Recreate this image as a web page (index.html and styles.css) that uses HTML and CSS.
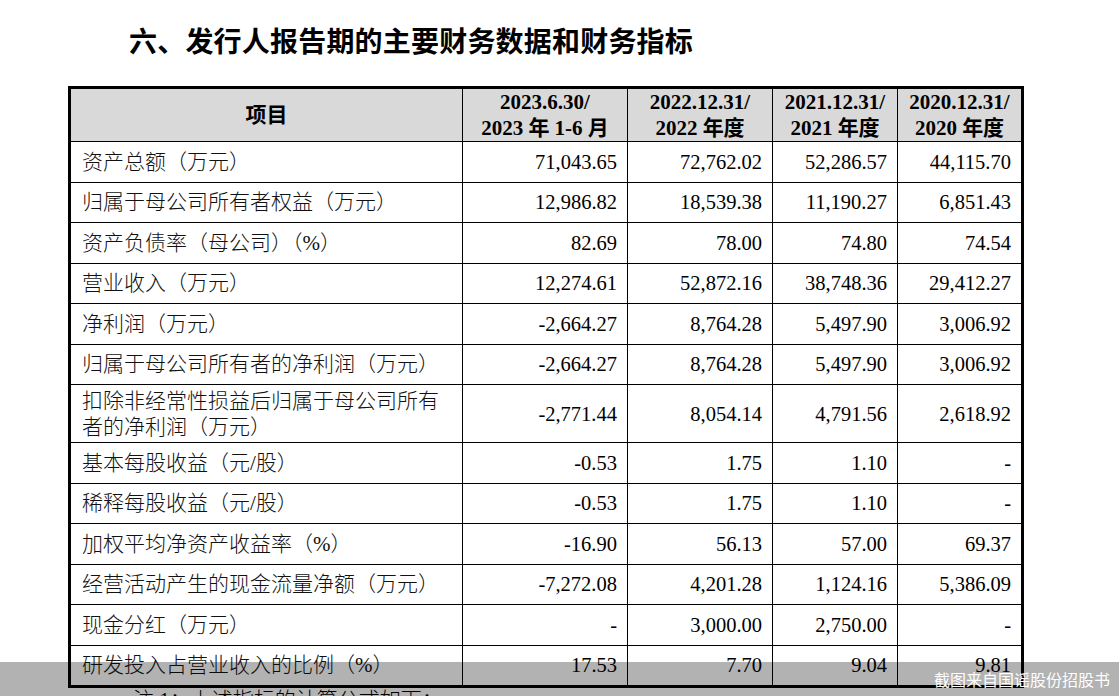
FILE: index.html
```html
<!DOCTYPE html>
<html lang="zh-CN">
<head>
<meta charset="utf-8">
<title>六、发行人报告期的主要财务数据和财务指标</title>
<link rel="stylesheet" href="styles.css">
</head>
<body>
<div class="page">
  <h1 class="title">六、发行人报告期的主要财务数据和财务指标</h1>
  <div class="fin-table">
    <div class="row head">
      <div class="cell">项目</div>
      <div class="cell">2023.6.30/<br>2023 年 1-6 月</div>
      <div class="cell">2022.12.31/<br>2022 年度</div>
      <div class="cell">2021.12.31/<br>2021 年度</div>
      <div class="cell">2020.12.31/<br>2020 年度</div>
    </div>
    <div class="row">
      <div class="cell">资产总额（万元）</div>
      <div class="cell">71,043.65</div><div class="cell">72,762.02</div><div class="cell">52,286.57</div><div class="cell">44,115.70</div>
    </div>
    <div class="row">
      <div class="cell">归属于母公司所有者权益（万元）</div>
      <div class="cell">12,986.82</div><div class="cell">18,539.38</div><div class="cell">11,190.27</div><div class="cell">6,851.43</div>
    </div>
    <div class="row">
      <div class="cell">资产负债率（母公司）（%）</div>
      <div class="cell">82.69</div><div class="cell">78.00</div><div class="cell">74.80</div><div class="cell">74.54</div>
    </div>
    <div class="row">
      <div class="cell">营业收入（万元）</div>
      <div class="cell">12,274.61</div><div class="cell">52,872.16</div><div class="cell">38,748.36</div><div class="cell">29,412.27</div>
    </div>
    <div class="row">
      <div class="cell">净利润（万元）</div>
      <div class="cell">-2,664.27</div><div class="cell">8,764.28</div><div class="cell">5,497.90</div><div class="cell">3,006.92</div>
    </div>
    <div class="row">
      <div class="cell">归属于母公司所有者的净利润（万元）</div>
      <div class="cell">-2,664.27</div><div class="cell">8,764.28</div><div class="cell">5,497.90</div><div class="cell">3,006.92</div>
    </div>
    <div class="row tall">
      <div class="cell">扣除非经常性损益后归属于母公司所有<br>者的净利润（万元）</div>
      <div class="cell">-2,771.44</div><div class="cell">8,054.14</div><div class="cell">4,791.56</div><div class="cell">2,618.92</div>
    </div>
    <div class="row">
      <div class="cell">基本每股收益（元/股）</div>
      <div class="cell">-0.53</div><div class="cell">1.75</div><div class="cell">1.10</div><div class="cell">-</div>
    </div>
    <div class="row">
      <div class="cell">稀释每股收益（元/股）</div>
      <div class="cell">-0.53</div><div class="cell">1.75</div><div class="cell">1.10</div><div class="cell">-</div>
    </div>
    <div class="row">
      <div class="cell">加权平均净资产收益率（%）</div>
      <div class="cell">-16.90</div><div class="cell">56.13</div><div class="cell">57.00</div><div class="cell">69.37</div>
    </div>
    <div class="row">
      <div class="cell">经营活动产生的现金流量净额（万元）</div>
      <div class="cell">-7,272.08</div><div class="cell">4,201.28</div><div class="cell">1,124.16</div><div class="cell">5,386.09</div>
    </div>
    <div class="row">
      <div class="cell">现金分红（万元）</div>
      <div class="cell">-</div><div class="cell">3,000.00</div><div class="cell">2,750.00</div><div class="cell">-</div>
    </div>
    <div class="row">
      <div class="cell">研发投入占营业收入的比例（%）</div>
      <div class="cell">17.53</div><div class="cell">7.70</div><div class="cell">9.04</div><div class="cell">9.81</div>
    </div>
  </div>
  <p class="note">注 1：上述指标的计算公式如下：</p>
</div>
<div class="watermark">截图来自国谣股份招股书</div>
</body>
</html>
```

FILE: styles.css
```css
html, body {
  margin: 0;
  padding: 0;
  background: #fff;
  overflow: hidden;
  height: 696px;
}

body {
  font-family: "Liberation Serif", "Noto Sans CJK SC", serif;
  color: #000;
}

.page {
  padding-top: 23px;
}

.title {
  margin: 0 0 29px 129px;
  font-family: "Noto Sans CJK SC", sans-serif;
  font-weight: 700;
  font-size: 28px;
  line-height: 34px;
  letter-spacing: 0.2px;
}

.fin-table {
  width: 956px;
  box-sizing: border-box;
  margin-left: 68px;
  border: 3px solid #000;
}

.row {
  display: grid;
  grid-template-columns: 391px 165px 145px 125px 124px;
  height: 40.5px;
  box-sizing: border-box;
  border-top: 1px solid #000;
}

.row.head {
  height: 52px;
  border-top: 0;
  background: #d9d9d9;
}

.row.tall {
  height: 58px;
}

.cell {
  display: flex;
  align-items: center;
  justify-content: flex-end;
  text-align: right;
  padding: 0 10px 0 0;
  border-left: 1px solid #000;
  font-size: 20.5px;
  line-height: 26px;
  white-space: nowrap;
}

.cell:first-child {
  border-left: 0;
  justify-content: flex-start;
  text-align: left;
  padding: 0 0 0 11px;
  font-size: 21px;
  font-weight: 300;
  color: #111;
}

.head .cell {
  justify-content: center;
  text-align: center;
  padding: 0;
  font-size: 21px;
  font-weight: 700;
  color: #000;
}

.note {
  margin: 0 0 0 133px;
  font-size: 21px;
  line-height: 24px;
  font-weight: 300;
}

.watermark {
  position: absolute;
  left: 0;
  right: 0;
  bottom: 0;
  height: 34px;
  background: rgba(0, 0, 0, 0.3);
  color: #fff;
  display: flex;
  align-items: center;
  justify-content: flex-end;
  padding-right: 9px;
  font-family: "Noto Sans CJK SC", sans-serif;
  font-size: 16px;
}
```
